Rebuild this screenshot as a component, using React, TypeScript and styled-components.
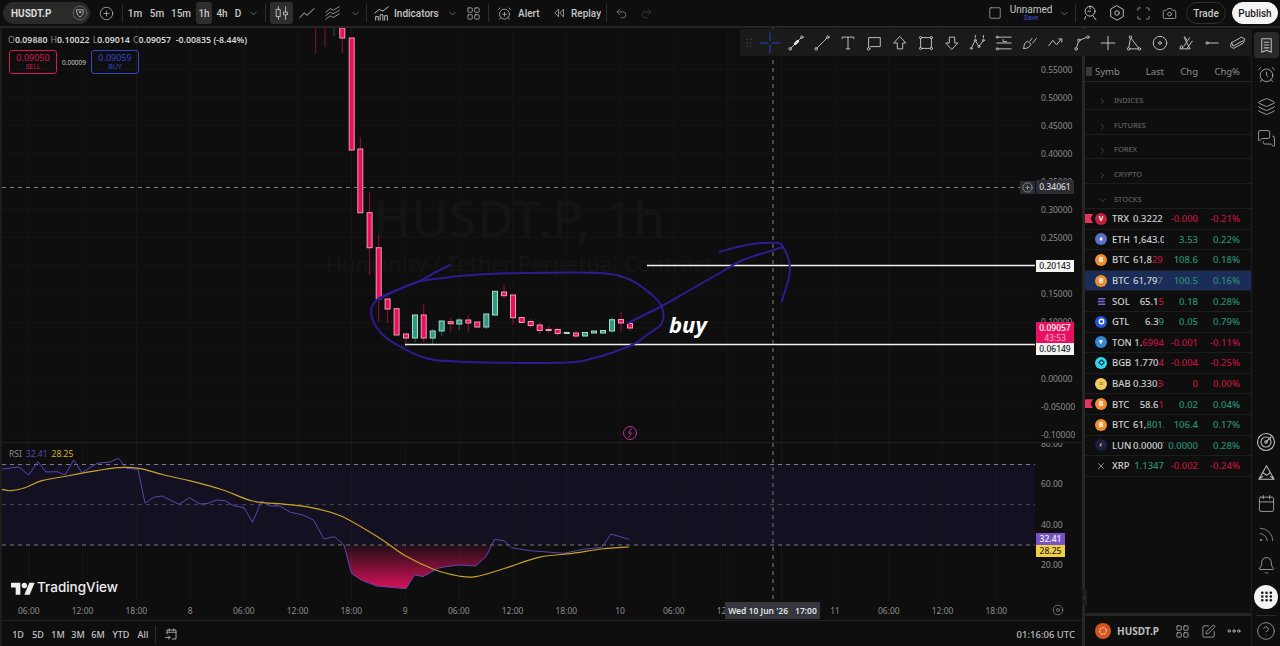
import React from 'react';
import styled, { createGlobalStyle } from 'styled-components';
import {
  AlarmClock,
  AlarmClockPlus,
  Bell,
  Calendar,
  Camera,
  ChevronDown,
  ChevronRight,
  CircleHelp,
  CirclePlus,
  Layers,
  LayoutGrid,
  MessagesSquare,
  Redo2,
  Rss,
  Scan,
  Square,
  SquarePen,
  Undo2,
  X,
} from 'lucide-react';

const FONT = '"Noto Sans", "Open Sans", sans-serif';
const BG = '#0e0e0e';
const LINE = '#262626';
const TEXT = '#c6c6c6';
const DIM = '#8c8c8c';
const RED = '#e8115f';
const GREEN = '#2e9a7f';
const GRID = '#151515';
const CELL = 53.75;

const GlobalStyle = createGlobalStyle`
  html, body { margin: 0; padding: 0; background: ${BG}; }
  body { font-family: ${FONT}; }
  * { box-sizing: border-box; }
`;

/* ---------- shell ---------- */

const Page = styled.div`
  position: relative;
  width: 1280px;
  height: 646px;
  overflow: hidden;
  display: flex;
  flex-direction: column;
  background: ${BG};
  color: ${TEXT};
`;

const TopBar = styled.header`
  height: 28px;
  flex: none;
  display: flex;
  align-items: center;
  padding: 0 2px 0 3px;
  border-bottom: 2px solid ${LINE};
  font-family: Roboto, ${FONT};
  font-size: 10px;
  font-weight: 500;
`;

const Workspace = styled.main`
  position: relative;
  flex: 1;
  min-height: 0;
  display: flex;
`;

const ChartColumn = styled.section`
  width: 1082px;
  flex: none;
  display: flex;
  flex-direction: column;
  border-left: 2px solid #1c1c1c;
`;

const ColumnRule = styled.div`
  width: 3px;
  flex: none;
  background: ${LINE};
`;

/* ---------- top bar ---------- */

const SymbolPill = styled.div`
  width: 87px;
  height: 22px;
  flex: none;
  display: flex;
  align-items: center;
  justify-content: space-between;
  padding: 0 2px 0 8px;
  border-radius: 11px;
  background: #2a2a2a;
  font-weight: 700;
  color: #dcdcdc;
`;

const Slot = styled.div<{ $w: number; $ml?: number; $on?: boolean }>`
  width: ${(p) => p.$w}px;
  height: 22px;
  flex: none;
  margin-left: ${(p) => p.$ml ?? 0}px;
  display: flex;
  align-items: center;
  justify-content: center;
  border-radius: 3px;
  background: ${(p) => (p.$on ? '#2e2e2e' : 'transparent')};
  white-space: nowrap;
`;

const BarRule = styled.div<{ $ml: number }>`
  width: 1px;
  height: 18px;
  flex: none;
  margin-left: ${(p) => p.$ml}px;
  background: #2c2c2c;
`;

const BarLabel = styled.span<{ $w: number; $ml?: number }>`
  width: ${(p) => p.$w}px;
  flex: none;
  margin-left: ${(p) => p.$ml ?? 0}px;
  font-weight: 500;
  white-space: nowrap;
`;

const BarRight = styled.div`
  margin-left: auto;
  display: flex;
  align-items: center;
`;

const LayoutName = styled.div`
  width: 50px;
  flex: none;
  display: flex;
  flex-direction: column;
  align-items: center;
  line-height: 9px;
  font-size: 10px;
  font-weight: 400;
`;

const SaveLink = styled.span`
  font-size: 7px;
  line-height: 8px;
  color: #3a4fd0;
`;

const PillButton = styled.div<{ $w: number; $ml: number; $solid?: boolean }>`
  width: ${(p) => p.$w}px;
  height: 22px;
  flex: none;
  margin-left: ${(p) => p.$ml}px;
  display: flex;
  align-items: center;
  justify-content: center;
  border-radius: 11px;
  border: 1px solid ${(p) => (p.$solid ? '#f4f4f4' : '#2f2f2f')};
  background: ${(p) => (p.$solid ? '#f4f4f4' : 'transparent')};
  color: ${(p) => (p.$solid ? '#1a1a1a' : TEXT)};
  font-weight: 500;
`;

/* ---------- icons ---------- */

const Glyph = styled.svg.attrs({ viewBox: '0 0 20 20', fill: 'none' })<{ $s?: number; $c?: string }>`
  width: ${(p) => p.$s ?? 18}px;
  height: ${(p) => p.$s ?? 18}px;
  flex: none;
  display: block;
  stroke: ${(p) => p.$c ?? '#bcbcbc'};
  stroke-width: 1.1;
  stroke-linecap: round;
  stroke-linejoin: round;
`;

const ico = { size: 15, strokeWidth: 1.2, color: '#bcbcbc' };
const chev = { size: 11, strokeWidth: 1.4, color: '#9a9a9a' };
const railIco = { size: 19, strokeWidth: 1, color: '#bcbcbc' };

/* ---------- drawing toolbar ---------- */

const DrawBar = styled.nav`
  position: absolute;
  top: 1px;
  left: 740px;
  z-index: 5;
  width: 512px;
  height: 27px;
  display: flex;
  align-items: center;
  background: #1a1a1a;
`;

const DrawGrip = styled.div`
  width: 17px;
  height: 26px;
  flex: none;
  display: flex;
  align-items: center;
  justify-content: center;
`;

const DrawTool = styled.div`
  width: 26px;
  height: 26px;
  flex: none;
  display: flex;
  align-items: center;
  justify-content: center;
`;

const drawTools: React.ReactNode[] = [
  <Glyph key="cross" $s={22} $c="#2d3fb8">
    <path d="M10 1v7M10 12v7M1 10h7M12 10h7" strokeWidth="1" />
  </Glyph>,
  <Glyph key="ray">
    <circle cx="3.5" cy="16.5" r="1.4" />
    <circle cx="16.5" cy="3.5" r="1.4" />
    <path d="M4.5 15.5l11-11" />
    <path d="M9 11l3-3" strokeWidth="3" stroke="#e8e8e8" />
  </Glyph>,
  <Glyph key="trend">
    <circle cx="3.5" cy="16.5" r="1.4" />
    <circle cx="16.5" cy="3.5" r="1.4" />
    <path d="M4.5 15.5l11-11" />
  </Glyph>,
  <Glyph key="text">
    <path d="M3.5 5V3.5h13V5M10 3.5v13M8 16.5h4" />
  </Glyph>,
  <Glyph key="note">
    <path d="M4 15V4h13v10H6" />
    <circle cx="4" cy="16.5" r="1.4" />
  </Glyph>,
  <Glyph key="up">
    <path d="M10 3l6.5 7H13v6.5H7V10H3.500z" />
  </Glyph>,
  <Glyph key="rect">
    <path d="M4 5.200v9.600M16 5.200v9.600M5.200 4h9.600M5.200 16h9.600" />
    <circle cx="4" cy="4" r="1.300" />
    <circle cx="16" cy="4" r="1.300" />
    <circle cx="4" cy="16" r="1.300" />
    <circle cx="16" cy="16" r="1.300" />
  </Glyph>,
  <Glyph key="down">
    <path d="M10 17l6.500-7H13V3.500H7V10H3.500z" />
  </Glyph>,
  <Glyph key="wave">
    <circle cx="2.500" cy="16" r="1.100" />
    <circle cx="7" cy="7" r="1.100" />
    <circle cx="11" cy="14" r="1.100" />
    <circle cx="16" cy="7" r="1.100" />
    <path d="M3 15l3.500-7.200M7.500 8l3 5M11.500 13l4-5.200M7 1.500v2.500M16 1.500v2.500" />
  </Glyph>,
  <Glyph key="fib">
    <path d="M4 3.500h14M2 10h16M4 16.500h14M9 6v2.500h4" />
    <circle cx="2.500" cy="3.500" r="1.200" />
    <circle cx="2.500" cy="16.500" r="1.200" />
  </Glyph>,
  <Glyph key="brush">
    <path d="M3 16c0-4 1.500-7 4.500-8l3.500 3.500c-1 3-4 5-8 4.500zM10 8l2-3M13 10l4-5" />
  </Glyph>,
  <Glyph key="zig">
    <path d="M2 13l4.500-6 4 5 5.500-6.500M13 5.500h3.500V9" />
  </Glyph>,
  <Glyph key="path">
    <circle cx="3.500" cy="16.500" r="1.400" />
    <circle cx="6.500" cy="7" r="1.400" />
    <circle cx="16.500" cy="3.500" r="1.400" />
    <path d="M4 15l2-6.500M8 6.500l7-2.500" />
  </Glyph>,
  <Glyph key="plus">
    <path d="M10 2.500v15M2.500 10h15" />
  </Glyph>,
  <Glyph key="tri">
    <circle cx="6" cy="3.500" r="1.400" />
    <circle cx="4" cy="16.500" r="1.400" />
    <circle cx="16" cy="16.500" r="1.400" />
    <path d="M6 5l-1.800 10M7 5l8 10.500M5.500 16.500h9" />
  </Glyph>,
  <Glyph key="circle">
    <circle cx="10" cy="10" r="7.500" />
    <circle cx="10" cy="10" r="1.500" />
  </Glyph>,
  <Glyph key="fan">
    <path d="M3 16.500h11.500L8 4M8.500 3l2.500 4M14 4l-6 9M17 8l-6 8" />
    <circle cx="5" cy="14.500" r="1.500" />
  </Glyph>,
  <Glyph key="seg">
    <circle cx="4.500" cy="10" r="1.300" />
    <path d="M6 10h11" />
  </Glyph>,
  <Glyph key="eraser">
    <path d="M3 9.500l11-6 3.500 2-1.500 4.500-11 6L2 14zM3 9.500l1.500 4 11-6" />
  </Glyph>,
];

/* ---------- price pane ---------- */

const PricePane = styled.div`
  height: 415px;
  flex: none;
  display: flex;
  border-bottom: 1px solid #1f1f1f;
`;

const RsiPane = styled.div`
  height: 157px;
  flex: none;
  display: flex;
`;

const Plot = styled.div`
  position: relative;
  width: 1033px;
  flex: none;
  overflow: hidden;
`;

const PlotSvg = styled.svg`
  position: relative;
  z-index: 1;
  display: block;
  width: 1033px;
  height: 100%;
`;

const Watermark = styled.div`
  position: absolute;
  top: 160px;
  left: 294px;
  width: 446px;
  text-align: center;
  color: #141414;
  font-weight: 500;
  white-space: nowrap;
`;

const WatermarkTitle = styled.div`
  font-size: 51px;
  line-height: 58px;
`;

const WatermarkSub = styled.div`
  font-size: 21.500px;
  line-height: 30px;
  margin-top: 3px;
`;

const Legend = styled.div`
  position: absolute;
  z-index: 2;
  top: 6px;
  left: 3px;
  font-size: 8.800px;
  line-height: 12px;
  font-weight: 600;
  color: #d4d4d4;
  white-space: nowrap;
`;

const LegendKey = styled.span`
  color: #8a8a8a;
  font-weight: 400;
  margin-left: 3px;
`;

const QuoteRow = styled.div`
  position: absolute;
  z-index: 2;
  top: 22px;
  left: 7px;
  display: flex;
  align-items: center;
`;

const QuoteBox = styled.div<{ $c: string }>`
  width: 48px;
  height: 24px;
  display: flex;
  flex-direction: column;
  align-items: center;
  justify-content: center;
  border: 1px solid ${(p) => p.$c};
  border-radius: 3px;
  color: ${(p) => p.$c};
  font-size: 9px;
  line-height: 10px;
`;

const QuoteTag = styled.span`
  font-size: 7px;
  line-height: 8px;
`;

const Spread = styled.span`
  width: 34px;
  text-align: center;
  font-size: 6.500px;
  color: #c8c8c8;
`;

const BuyNote = styled.div`
  position: absolute;
  z-index: 2;
  top: 281px;
  left: 667px;
  color: #fff;
  font: italic 700 22px/30px "Open Sans", ${FONT};
`;

const PriceAxis = styled.div`
  position: relative;
  width: 47px;
  flex: none;
  overflow: hidden;
  padding-top: 27px;
`;

const AxisTick = styled.div`
  height: 28.100px;
  display: flex;
  align-items: center;
  padding-left: 6px;
  font-size: 8.500px;
  color: ${DIM};
`;

const RsiAxis = styled(PriceAxis)`
  padding-top: 0;
`;

const RsiTick = styled.div<{ $h: number }>`
  height: ${(p) => p.$h}px;
  display: flex;
  align-items: center;
  padding-left: 6px;
  font-size: 8.500px;
  color: ${DIM};
`;

const AxisTag = styled.div<{ $top: number; $bg: string; $fg: string; $w?: number; $h?: number }>`
  position: absolute;
  z-index: 2;
  top: ${(p) => p.$top}px;
  left: 1px;
  width: ${(p) => p.$w ?? 38}px;
  height: ${(p) => p.$h ?? 12}px;
  display: flex;
  flex-direction: column;
  align-items: center;
  justify-content: center;
  background: ${(p) => p.$bg};
  color: ${(p) => p.$fg};
  font-size: 8.500px;
  line-height: 10px;
  font-weight: 500;
`;

const CountDown = styled.span`
  color: #ffb3c9;
  font-weight: 400;
`;

const CrossBadge = styled.div`
  position: absolute;
  z-index: 2;
  top: 153px;
  left: 1018px;
  width: 15px;
  height: 13px;
  display: flex;
  align-items: center;
  justify-content: center;
  background: #2b2d33;
`;

const RsiLegend = styled.div`
  position: absolute;
  z-index: 2;
  top: 5px;
  left: 7px;
  display: flex;
  gap: 4px;
  font-size: 8.500px;
  line-height: 12px;
`;

const RsiValue = styled.span<{ $c: string }>`
  color: ${(p) => p.$c};
`;

const BrandMark = styled.div`
  position: absolute;
  z-index: 2;
  bottom: 3px;
  left: 9px;
  display: flex;
  align-items: center;
  gap: 2px;
  color: #eee;
  font: 500 13.500px/20px Inter, ${FONT};
`;

/* ---------- time axis and range bar ---------- */

const TimeAxis = styled.div`
  position: relative;
  height: 21px;
  flex: none;
  display: flex;
  align-items: center;
  border-bottom: 1px solid #222;
`;

const TimeCell = styled.span`
  width: ${CELL}px;
  flex: none;
  text-align: center;
  font-size: 8.500px;
  color: ${DIM};
`;

const TimeFlag = styled.div`
  position: absolute;
  top: 2px;
  left: 723px;
  width: 95px;
  height: 17px;
  display: flex;
  align-items: center;
  justify-content: center;
  gap: 7px;
  background: #33363c;
  color: #e4e4e4;
  font-size: 8.500px;
  font-weight: 600;
`;

const AxisGear = styled.div`
  position: absolute;
  top: 4px;
  left: 1050px;
`;

const RangeBar = styled.footer`
  flex: 1;
  min-height: 0;
  display: flex;
  align-items: center;
  padding: 2px 0 0 6px;
  font-size: 9px;
  font-weight: 500;
`;

const RangeClock = styled.span`
  margin-left: auto;
  padding-right: 7px;
  font-size: 9.500px;
  color: #bdbdbd;
`;

/* ---------- watchlist ---------- */

const Watchlist = styled.aside`
  width: 166px;
  flex: none;
  display: flex;
  flex-direction: column;
  padding-top: 32.500px;
`;

const ListHeader = styled.div`
  height: 21px;
  flex: none;
  display: flex;
  align-items: center;
  padding: 1px 0 0 10px;
  border-bottom: 1px solid ${LINE};
  font-size: 9.500px;
  color: ${DIM};
`;

const HeaderMark = styled.span`
  position: absolute;
  left: 1086px;
  width: 6px;
  height: 9px;
  background: #3a3a3a;
`;

const HeadCell = styled.span<{ $w: number; $left?: boolean }>`
  width: ${(p) => p.$w}px;
  flex: none;
  text-align: ${(p) => (p.$left ? 'left' : 'right')};
`;

const GroupRow = styled.div<{ $first?: boolean }>`
  height: ${(p) => (p.$first ? 28.300 : 24.800)}px;
  flex: none;
  display: flex;
  align-items: flex-end;
  gap: 7px;
  padding: 0 0 3px 13px;
  border-bottom: 1px solid #1d1d1d;
  font-size: 7.500px;
  line-height: 11px;
  color: #6f6f6f;
`;

const StockRow = styled.div<{ $on?: boolean }>`
  position: relative;
  height: 20.600px;
  flex: none;
  display: flex;
  align-items: center;
  padding-left: 10px;
  border-bottom: 1px solid #1d1d1d;
  background: ${(p) => (p.$on ? '#1a2c58' : 'transparent')};
  font-size: 9.500px;
  font-weight: 500;
`;

const Ribbon = styled.span`
  position: absolute;
  left: 0;
  top: 5px;
  width: 8px;
  height: 9px;
  background: #e8335f;
  clip-path: polygon(0 0, 100% 0, 70% 50%, 100% 100%, 0 100%);
`;

const CoinBadge = styled.span<{ $bg: string; $fg?: string }>`
  width: 12px;
  height: 12px;
  flex: none;
  display: flex;
  align-items: center;
  justify-content: center;
  border-radius: 50%;
  background: ${(p) => p.$bg};
  color: ${(p) => p.$fg ?? '#fff'};
  font-size: 7px;
  line-height: 12px;
  font-weight: 700;
`;

const Ticker = styled.span`
  width: 19px;
  flex: none;
  margin: 0 2px 0 5px;
  overflow: hidden;
  color: #cfcfcf;
`;

const LastCell = styled.span`
  width: 31px;
  flex: none;
  overflow: hidden;
  text-align: right;
  white-space: nowrap;
  color: #cfcfcf;
  font-weight: 500;
`;

const Flash = styled.span<{ $c: string }>`
  color: ${(p) => p.$c};
`;

const ChangeCell = styled.span<{ $w: number; $up: boolean }>`
  width: ${(p) => p.$w}px;
  flex: none;
  text-align: right;
  white-space: nowrap;
  color: ${(p) => (p.$up ? '#2b8f76' : '#c2123f')};
`;

const ListFooter = styled.div`
  margin-top: auto;
  height: 33px;
  flex: none;
  display: flex;
  align-items: center;
  padding-left: 10px;
  border-top: 3px solid ${LINE};
`;

const FooterCoin = styled.span`
  width: 16px;
  height: 16px;
  flex: none;
  display: flex;
  align-items: center;
  justify-content: center;
  border-radius: 50%;
  background: #d2551f;
`;

const FooterName = styled.span`
  width: 52px;
  flex: none;
  margin-left: 6px;
  font-size: 10px;
  font-weight: 700;
  color: #bdbdbd;
`;

const FooterTool = styled.div`
  width: 26px;
  flex: none;
  display: flex;
  justify-content: center;
`;

const CollapseHandle = styled.div`
  position: absolute;
  top: 562px;
  left: 1082px;
  z-index: 3;
  width: 5px;
  height: 16px;
  display: flex;
  align-items: center;
  justify-content: center;
  background: #1e1e1e;
`;

/* ---------- right rail ---------- */

const Rail = styled.aside`
  flex: 1;
  display: flex;
  flex-direction: column;
  align-items: center;
  border-left: 1px solid #1d1d1d;
  padding-top: 4px;
`;

const RailTile = styled.div`
  width: 25px;
  height: 26px;
  flex: none;
  display: flex;
  align-items: center;
  justify-content: center;
  border-radius: 4px;
  background: #2a2a2a;
`;

const RailSlot = styled.div<{ $h?: number }>`
  height: ${(p) => p.$h ?? 32}px;
  flex: none;
  display: flex;
  align-items: center;
  justify-content: center;
`;

const RailBottom = styled.div`
  margin-top: auto;
  display: flex;
  flex-direction: column;
  align-items: center;
`;

const RailRule = styled.div`
  width: 20px;
  height: 1px;
  flex: none;
  margin-top: 3px;
  background: #2a2a2a;
`;

const AppsDot = styled.div`
  width: 24px;
  height: 24px;
  display: flex;
  align-items: center;
  justify-content: center;
  border-radius: 50%;
  background: #f4f4f4;
`;

/* ---------- chart data ---------- */

type Candle = [number, number, number, number?, number?];

const redCandles: Candle[] = [
  [342.3, 28, 38, 28, 53], [351.7, 38, 150], [360.3, 149, 212.7, 137, 213], [369.6, 212.7, 247.7, 192, 275],
  [378.7, 247.7, 299, 235, 322], [387.6, 299, 309, 299, 323], [396.6, 308.7, 335], [406, 334, 338, 334, 347],
  [423.7, 315, 338, 304, 342], [450.7, 321.7, 323.7, 318, 332], [468.3, 320, 323, 315, 332], [477.3, 322, 327],
  [504, 292, 295.7, 285, 299], [513, 295, 317.7, 295, 325], [521.7, 317.5, 322.5], [530.7, 321.5, 325.5, 319, 328],
  [539.7, 325, 330.5, 322, 334], [548.7, 329.5, 330.5, 326, 333], [557.7, 329.5, 333.5, 328, 336], [576, 333, 336, 331, 338],
  [621, 319.5, 323, 312, 332], [630, 323.5, 328, 323, 331],
];

const greenCandles: Candle[] = [
  [415, 315, 338, 315, 342], [432.7, 331, 338, 329, 345], [441.7, 321, 331, 321, 336], [459.3, 320, 324, 318, 330],
  [486.3, 314, 327, 314, 329], [495, 291.3, 315], [566.7, 332.5, 333.5], [585, 332.5, 336], [594, 331, 333],
  [603, 330.5, 333], [612, 319.7, 331, 318, 333],
];

const purple: number[][] = [
  [2, 469], [19, 467], [28.6, 475], [38, 461.7], [46, 472], [57, 471.7], [65, 475], [73.7, 460], [82, 472.7], [97, 463.3],
  [110, 462], [118.7, 458.3], [126, 468.3], [138, 469.3], [145, 503.3], [153.6, 497.3], [162, 496], [179, 504.3],
  [189.4, 497.7], [200, 504], [208, 503.3], [216.7, 500], [225, 500.7], [233.6, 505.7], [244, 507.7], [252.5, 522.3],
  [261.8, 500.7], [269.4, 506], [280, 506], [290.4, 512.3], [303, 515], [313.5, 520], [324, 539], [334.6, 536.7],
  [344, 545], [351.4, 573.3], [361, 580], [376.7, 586], [406, 588.7], [414.6, 575], [423, 576.7], [437.7, 568.3],
  [446, 566.7], [458.7, 565], [475.6, 566], [486, 556.7], [494.5, 539.3], [504, 540.7], [511.4, 547.7], [530, 550.7],
  [564, 553.3], [583, 549.3], [602, 547.3], [611, 534], [629, 539.3],
];

const yellow: number[][] = [
  [2, 489.3], [10.5, 490.7], [25, 487.7], [42, 480.7], [67, 476], [97, 470.7], [118, 467.7], [139, 468.3], [164, 475],
  [189.4, 480.7], [223, 490], [252.5, 501], [286, 504.3], [311.4, 507.7], [341, 516], [379, 537.7], [404, 555],
  [433.5, 569.3], [458.7, 576], [475.6, 576.7], [505, 568.3], [538.7, 557.3], [572.4, 553.3], [602, 549], [629, 547],
];

const ring: number[][] = [
  [420, 281], [460, 276], [506.7, 273.3], [593, 272.7], [626.7, 278.3], [650, 293.3], [661.7, 306.7], [661.7, 323.3],
  [646.7, 335], [631.7, 345], [593, 358.3], [560, 362.7], [460, 361.7], [426.7, 358.3], [403.3, 348.3], [383, 335],
  [371.7, 316.7], [375, 301.7], [393, 291.7], [420, 281],
];

const arrowShaft: number[][] = [[628, 323], [660, 307], [690, 290], [720, 273], [743, 260], [783, 247]];
const arrowHead: number[][] = [[720, 251.7], [746.7, 245], [773, 242.7], [783, 246.7], [790, 270], [781.7, 301.7]];

// catmull-rom through the points, for the hand drawn strokes
const smooth = (pts: number[][]) => {
  let d = `M${pts[0][0]} ${pts[0][1]}`;
  for (let i = 0; i < pts.length - 1; i++) {
    const a = pts[Math.max(i - 1, 0)];
    const b = pts[i];
    const c = pts[i + 1];
    const e = pts[Math.min(i + 2, pts.length - 1)];
    const c1 = [b[0] + (c[0] - a[0]) / 6, b[1] + (c[1] - a[1]) / 6];
    const c2 = [c[0] - (e[0] - b[0]) / 6, c[1] - (e[1] - b[1]) / 6];
    d += ` C${c1[0].toFixed(1)} ${c1[1].toFixed(1)} ${c2[0].toFixed(1)} ${c2[1].toFixed(1)} ${c[0]} ${c[1]}`;
  }
  return d;
};

const toPoints = (pts: number[][]) => pts.map((p) => p.join(',')).join(' ');

const dip = purple.filter((p) => p[0] >= 344 && p[0] <= 494.5);
const dipArea = `${toPoints(dip)} 494.5,545 344,545`;

// empty labels sit fully under a flag or a price tag in the picture
const timeLabels = ['06:00', '12:00', '18:00', '8', '06:00', '12:00', '18:00', '9', '06:00', '12:00', '18:00', '10', '06:00', '12:00', '', '11', '06:00', '12:00', '18:00'];
const gridXs = timeLabels.map((_, i) => 29 + CELL * i);
const priceTicks = ['0.55000', '0.50000', '0.45000', '0.40000', '0.35000', '0.30000', '0.25000', '', '0.15000', '0.10000', '', '0.00000', '-0.05000', '-0.10000'];
const priceYs = priceTicks.map((_, i) => 69 + 28.1 * i);

const CandleMarks = ({ data, body, edge }: { data: Candle[]; body: string; edge: string }) => (
  <>
    {data.map(([x, top, bottom, hi, lo]) => (
      <g key={x}>
        {hi !== undefined && <line x1={x} x2={x} y1={hi} y2={lo} stroke={body} strokeOpacity="0.6" />}
        <rect x={x - 2.5} y={top} width={5} height={bottom - top} fill={body} stroke={edge} />
      </g>
    ))}
  </>
);

const PriceChart = () => (
  <PlotSvg viewBox="2 28 1033 414">
    {priceYs.map((y) => (
      <line key={y} x1="2" x2="1035" y1={y} y2={y} stroke={GRID} />
    ))}
    {gridXs.map((x) => (
      <line key={x} x1={x} x2={x} y1="28" y2="442" stroke={GRID} />
    ))}
    <line x1="2" x2="1035" y1="328" y2="328" stroke="#3b1522" strokeDasharray="1 2" />
    <path d="M315.7 28v25M325 28v19" stroke={RED} strokeOpacity="0.55" />
    <path d="M334 28v8" stroke={GREEN} strokeOpacity="0.6" />
    <CandleMarks data={redCandles} body={RED} edge="#f59ab5" />
    <CandleMarks data={greenCandles} body={GREEN} edge="#a5dccb" />
    <path d="M647 265.500H1035M405 344.500H1035" stroke="#f0f0f0" strokeWidth="1.500" />
    <path d="M2 187.500H1020" stroke="#7c7c7c" strokeDasharray="4 4" />
    <path d="M773 28V442" stroke="#7c7c7c" strokeDasharray="4 4" />
    <g fill="none" stroke="#2c1c92" strokeWidth="2" strokeLinecap="round">
      <path d="M450 265Q435 272 420 281Q400 288 379 299" />
      <path d={smooth(ring)} />
      <path d={smooth(arrowShaft)} />
      <path d={smooth(arrowHead)} />
    </g>
    <g fill="none" stroke="#c0309a">
      <circle cx="630" cy="433" r="6.500" />
      <path d="M631.500 428.500l-3 4.500h3l-3 4.500" />
    </g>
  </PlotSvg>
);

const RsiChart = () => (
  <PlotSvg viewBox="2 443 1033 157">
    <defs>
      <linearGradient id="dipFill" x1="0" x2="0" y1="545" y2="590" gradientUnits="userSpaceOnUse">
        <stop offset="0" stopColor="#e8115f" stopOpacity="0.08" />
        <stop offset="1" stopColor="#e8115f" stopOpacity="0.95" />
      </linearGradient>
    </defs>
    <rect x="2" y="464" width="1033" height="81" fill="#131022" />
    {gridXs.map((x) => (
      <line key={x} x1={x} x2={x} y1="443" y2="600" stroke="#191919" strokeOpacity="0.7" />
    ))}
    <polygon points={dipArea} fill="url(#dipFill)" />
    <path d="M2 464.500H1035M2 545H1035" stroke="#7c7c7c" strokeDasharray="4 4" />
    <path d="M2 504.700H1035" stroke="#4e4e4e" strokeDasharray="4 4" />
    <path d="M773 443V600" stroke="#7c7c7c" strokeDasharray="4 4" />
    <polyline points={toPoints(purple)} fill="none" stroke="#5b45b0" />
    <path d={smooth(yellow)} fill="none" stroke="#c9a227" strokeWidth="1.200" />
  </PlotSvg>
);

/* ---------- watchlist data ---------- */

type Stock = {
  coin: React.ReactNode;
  name: string;
  last: string;
  tail?: string;
  tailColor?: string;
  chg: string;
  pct: string;
  up: boolean;
  flag?: boolean;
  on?: boolean;
};

const FLASH_RED = '#c2123f';
const FLASH_GREEN = '#2b8f76';

const btcCoin = <CoinBadge $bg="#ee8e2f">B</CoinBadge>;

const stocks: Stock[] = [
  { coin: <CoinBadge $bg="#c2203f">V</CoinBadge>, name: 'TRX', last: '0.3222', tail: '14', tailColor: FLASH_RED, chg: '-0.000', pct: '-0.21%', up: false, flag: true },
  { coin: <CoinBadge $bg="#5d6fc9">♦</CoinBadge>, name: 'ETH', last: '1,643.02', chg: '3.53', pct: '0.22%', up: true },
  { coin: btcCoin, name: 'BTC', last: '61,8', tail: '29.1', tailColor: FLASH_RED, chg: '108.6', pct: '0.18%', up: true },
  { coin: btcCoin, name: 'BTC', last: '61,79', tail: '7.1', tailColor: '#5a7a9a', chg: '100.5', pct: '0.16%', up: true, on: true },
  {
    coin: (
      <CoinBadge $bg="transparent">
        <Glyph $s={11} $c="#7a6ae0">
          <path d="M5 5h11M4 10h11M5 15h11" strokeWidth="2.500" />
        </Glyph>
      </CoinBadge>
    ),
    name: 'SOL', last: '65.1', tail: '5', tailColor: FLASH_RED, chg: '0.18', pct: '0.28%', up: true,
  },
  {
    coin: (
      <CoinBadge $bg="#2757d6">
        <Glyph $s={9} $c="#fff">
          <circle cx="10" cy="10" r="5" strokeWidth="3" />
        </Glyph>
      </CoinBadge>
    ),
    name: 'GTL', last: '6.3', tail: '9', tailColor: FLASH_GREEN, chg: '0.05', pct: '0.79%', up: true,
  },
  { coin: <CoinBadge $bg="#3586d2">▾</CoinBadge>, name: 'TON', last: '1.', tail: '6994', tailColor: FLASH_RED, chg: '-0.001', pct: '-0.11%', up: false },
  {
    coin: (
      <CoinBadge $bg="#35d6ea">
        <Glyph $s={9} $c="#0c3f4a">
          <path d="M4 10l6-6 6 6-6 6z" strokeWidth="2.500" />
        </Glyph>
      </CoinBadge>
    ),
    name: 'BGB', last: '1.770', tail: '4', tailColor: FLASH_RED, chg: '-0.004', pct: '-0.25%', up: false,
  },
  { coin: <CoinBadge $bg="#efcb60" $fg="#8a6a10">≡</CoinBadge>, name: 'BAB', last: '0.330', tail: '36', tailColor: FLASH_RED, chg: '0', pct: '0.00%', up: false },
  { coin: btcCoin, name: 'BTC', last: '58.6', tail: '1', tailColor: FLASH_RED, chg: '0.02', pct: '0.04%', up: true, flag: true },
  { coin: btcCoin, name: 'BTC', last: '61,', tail: '801.1', tailColor: FLASH_GREEN, chg: '106.4', pct: '0.17%', up: true },
  { coin: <CoinBadge $bg="#1b1f45" $fg="#f0c93a">◐</CoinBadge>, name: 'LUN', last: '0.0000', tail: '74', tailColor: '#9a9a9a', chg: '0.0000', pct: '0.28%', up: true },
  {
    coin: (
      <CoinBadge $bg="transparent">
        <X size={10} strokeWidth={1.6} color="#c8c8c8" />
      </CoinBadge>
    ),
    name: 'XRP', last: '', tail: '1.1347', tailColor: FLASH_GREEN, chg: '-0.002', pct: '-0.24%', up: false,
  },
];

const groups = ['INDICES', 'FUTURES', 'FOREX', 'CRYPTO'];
const ranges: [string, number][] = [['1D', 20], ['5D', 20], ['1M', 20], ['3M', 20], ['6M', 20], ['YTD', 26], ['All', 18]];

export default function App() {
  return (
    <Page>
      <GlobalStyle />
      <TopBar>
        <SymbolPill>
          HUSDT.P
          <Glyph $s={16}>
            <circle cx="10" cy="10" r="8.500" stroke="#6a6a6a" />
            <path d="M6 6h8v4c0 2-2 3.500-4 5-2-1.500-4-3-4-5z" />
            <circle cx="10" cy="9" r="1" />
          </Glyph>
        </SymbolPill>
        <Slot $w={32}><CirclePlus {...ico} /></Slot>
        <BarRule $ml={0} />
        <Slot $w={22} $ml={1}>1m</Slot>
        <Slot $w={22}>5m</Slot>
        <Slot $w={26}>15m</Slot>
        <Slot $w={16} $ml={2} $on>1h</Slot>
        <Slot $w={20}>4h</Slot>
        <Slot $w={12}>D</Slot>
        <Slot $w={14} $ml={2}><ChevronDown {...chev} /></Slot>
        <BarRule $ml={5} />
        <Slot $w={23} $ml={4} $on>
          <Glyph>
            <path d="M6 3v14M14 3v14" />
            <rect x="4" y="6" width="4" height="8" fill="#2e2e2e" />
            <path d="M12 9h4v3h-4z" fill="#2e2e2e" />
          </Glyph>
        </Slot>
        <Slot $w={26} $ml={1}>
          <Glyph><path d="M2 15l5-5 3 2.500L18 5" /></Glyph>
        </Slot>
        <Slot $w={26}>
          <Glyph $c="#8f8f8f">
            <path d="M2 9l5-4 3 2 7-4M2 13l5-4 3 2 7-4M2 17l5-4 3 2 7-4" />
          </Glyph>
        </Slot>
        <Slot $w={18}><ChevronDown {...chev} /></Slot>
        <BarRule $ml={2} />
        <Slot $w={20} $ml={5}>
          <Glyph>
            <path d="M2 10l5-4 4 2 6-5M3 18v-4h3v4M8 18v-6h3v6M13 18v-5h3v5" />
          </Glyph>
        </Slot>
        <BarLabel $w={48} $ml={2}>Indicators</BarLabel>
        <Slot $w={14} $ml={3}><ChevronDown {...chev} /></Slot>
        <Slot $w={22} $ml={3}><LayoutGrid {...ico} /></Slot>
        <BarRule $ml={4} />
        <Slot $w={28} $ml={1}><AlarmClockPlus {...ico} /></Slot>
        <BarLabel $w={24}>Alert</BarLabel>
        <Slot $w={28} $ml={3}>
          <Glyph $s={14}><path d="M9 5l-5 5 5 5zM16 5l-5 5 5 5z" /></Glyph>
        </Slot>
        <BarLabel $w={35} $ml={-2}>Replay</BarLabel>
        <BarRule $ml={0} />
        <Slot $w={28}><Undo2 size={13} strokeWidth={1.200} color="#9a9a9a" /></Slot>
        <Slot $w={22}><Redo2 size={13} strokeWidth={1.200} color="#4a4a4a" /></Slot>
        <BarRight>
          <Slot $w={22}><Square size={14} strokeWidth={1.200} color="#bcbcbc" /></Slot>
          <LayoutName>
            Unnamed
            <SaveLink>Save</SaveLink>
          </LayoutName>
          <Slot $w={16}><ChevronDown {...chev} /></Slot>
          <BarRule $ml={3} />
          <Slot $w={26} $ml={2}>
            <Glyph>
              <circle cx="9" cy="8" r="5.500" />
              <path d="M9 2.500v3M4 14l-1 3M12 13l3.500 4.500M6.500 8h3" />
            </Glyph>
          </Slot>
          <Slot $w={26}>
            <Glyph>
              <path d="M10 2l7 4v8l-7 4-7-4V6z" />
              <circle cx="10" cy="10" r="2.500" />
            </Glyph>
          </Slot>
          <Slot $w={26}><Scan {...ico} /></Slot>
          <Slot $w={26}><Camera {...ico} /></Slot>
          <PillButton $w={40} $ml={4}>Trade</PillButton>
          <PillButton $w={46} $ml={6} $solid>Publish</PillButton>
        </BarRight>
      </TopBar>

      <Workspace>
        <DrawBar>
          <DrawGrip>
            <Glyph $s={14} $c="#444">
              <path d="M7 5h.6M12 5h.6M7 10h.6M12 10h.6M7 15h.6M12 15h.6" strokeWidth="1.800" />
            </Glyph>
          </DrawGrip>
          {drawTools.map((tool, i) => (
            <DrawTool key={i}>{tool}</DrawTool>
          ))}
        </DrawBar>

        <ChartColumn>
          <PricePane>
            <Plot>
              <Watermark>
                <WatermarkTitle>HUSDT.P, 1h</WatermarkTitle>
                <WatermarkSub>Humanity / Tether Perpetual Contract</WatermarkSub>
              </Watermark>
              <PriceChart />
              <Legend>
                <LegendKey>O</LegendKey>0.09880
                <LegendKey>H</LegendKey>0.10022
                <LegendKey>L</LegendKey>0.09014
                <LegendKey>C</LegendKey>0.09057 &nbsp;-0.00835 (-8.44%)
              </Legend>
              <QuoteRow>
                <QuoteBox $c="#d8184f">
                  0.09050
                  <QuoteTag>SELL</QuoteTag>
                </QuoteBox>
                <Spread>0.00009</Spread>
                <QuoteBox $c="#3346c8">
                  0.09059
                  <QuoteTag>BUY</QuoteTag>
                </QuoteBox>
              </QuoteRow>
              <BuyNote>buy</BuyNote>
              <CrossBadge>
                <CirclePlus size={11} strokeWidth={1.300} color="#bcbcbc" />
              </CrossBadge>
            </Plot>
            <PriceAxis>
              {priceTicks.map((t, i) => (
                <AxisTick key={i}>{t}</AxisTick>
              ))}
              <AxisTag $top={152} $h={14} $bg="#2b2d33" $fg="#d8d8d8">0.34061</AxisTag>
              <AxisTag $top={232} $bg="#f4f4f4" $fg="#222">0.20143</AxisTag>
              <AxisTag $top={294} $h={21} $bg={RED} $fg="#fff">
                0.09057
                <CountDown>43:53</CountDown>
              </AxisTag>
              <AxisTag $top={315} $bg="#f4f4f4" $fg="#222">0.06149</AxisTag>
            </PriceAxis>
          </PricePane>

          <RsiPane>
            <Plot>
              <RsiChart />
              <RsiLegend>
                <RsiValue $c={DIM}>RSI</RsiValue>
                <RsiValue $c="#5b45b0">32.41</RsiValue>
                <RsiValue $c="#d9b52e">28.25</RsiValue>
              </RsiLegend>
              <BrandMark>
                <svg width="24" height="15" viewBox="0 0 36 22" fill="#eee">
                  <path d="M14 22H7V11H0V4h14v18zM28 22h-8l7.500-18h8L28 22z" />
                  <circle cx="20" cy="8" r="4" />
                </svg>
                TradingView
              </BrandMark>
            </Plot>
            <RsiAxis>
              <RsiTick $h={0}>80.00</RsiTick>
              <RsiTick $h={80}>60.00</RsiTick>
              <RsiTick $h={2}>40.00</RsiTick>
              <RsiTick $h={78}>20.00</RsiTick>
              <AxisTag $top={90} $w={29} $bg="#7a52c8" $fg="#f2f2f2">32.41</AxisTag>
              <AxisTag $top={102} $w={29} $bg="#f0d040" $fg="#222">28.25</AxisTag>
            </RsiAxis>
          </RsiPane>

          <TimeAxis>
            {timeLabels.map((t, i) => (
              <TimeCell key={i}>{t}</TimeCell>
            ))}
            <TimeFlag>
              <span>Wed 10 Jun &apos;26</span>
              <span>17:00</span>
            </TimeFlag>
            <AxisGear>
              <Glyph $s={12} $c="#9a9a9a">
                <circle cx="10" cy="10" r="8" />
                <circle cx="10" cy="10" r="2.500" />
              </Glyph>
            </AxisGear>
          </TimeAxis>

          <RangeBar>
            {ranges.map(([label, w]) => (
              <Slot key={label} $w={w}>{label}</Slot>
            ))}
            <BarRule $ml={3} />
            <Slot $w={30}>
              <Glyph $s={15}>
                <path d="M4 9V4h12v12h-5M4 7h12M7 2.500V5M13 2.500V5M2 14h6M6 12l2 2-2 2" />
              </Glyph>
            </Slot>
            <RangeClock>01:16:06 UTC</RangeClock>
          </RangeBar>
        </ChartColumn>

        <ColumnRule />

        <Watchlist>
          <ListHeader>
            <HeaderMark />
            <HeadCell $w={46} $left>Symb</HeadCell>
            <HeadCell $w={23}>Last</HeadCell>
            <HeadCell $w={34}>Chg</HeadCell>
            <HeadCell $w={42}>Chg%</HeadCell>
          </ListHeader>
          {groups.map((g, i) => (
            <GroupRow key={g} $first={i === 0}>
              <ChevronRight size={9} strokeWidth={1.400} color="#6f6f6f" />
              {g}
            </GroupRow>
          ))}
          <GroupRow>
            <ChevronDown size={9} strokeWidth={1.400} color="#6f6f6f" />
            STOCKS
          </GroupRow>
          {stocks.map((s, i) => (
            <StockRow key={i} $on={s.on}>
              {s.flag && <Ribbon />}
              {s.coin}
              <Ticker>{s.name}</Ticker>
              <LastCell>
                {s.last}
                {s.tail && <Flash $c={s.tailColor ?? TEXT}>{s.tail}</Flash>}
              </LastCell>
              <ChangeCell $w={34} $up={s.up}>{s.chg}</ChangeCell>
              <ChangeCell $w={42} $up={s.up}>{s.pct}</ChangeCell>
            </StockRow>
          ))}
          <ListFooter>
            <FooterCoin>
              <Glyph $s={12} $c="#f3c7b0">
                <circle cx="10" cy="10" r="5.500" strokeDasharray="2 3" strokeWidth="2" />
              </Glyph>
            </FooterCoin>
            <FooterName>HUSDT.P</FooterName>
            <FooterTool><LayoutGrid {...ico} /></FooterTool>
            <FooterTool><SquarePen {...ico} /></FooterTool>
            <FooterTool>
              <Glyph $s={16}>
                <circle cx="4" cy="10" r="1.500" />
                <circle cx="10" cy="10" r="1.500" />
                <circle cx="16" cy="10" r="1.500" />
              </Glyph>
            </FooterTool>
          </ListFooter>
        </Watchlist>

        <CollapseHandle>
          <ChevronRight size={6} strokeWidth={1.500} color="#888" />
        </CollapseHandle>

        <Rail>
          <RailTile>
            <Glyph $s={19}>
              <path d="M5 3h10v14l-5-2-5 2zM7.500 6.500h5M7.500 9.500h5M7.500 12.500h5" />
            </Glyph>
          </RailTile>
          <RailSlot><AlarmClock {...railIco} /></RailSlot>
          <RailSlot><Layers {...railIco} /></RailSlot>
          <RailSlot><MessagesSquare {...railIco} /></RailSlot>
          <RailBottom>
            <RailSlot $h={31}>
              <Glyph $s={20}>
                <circle cx="10" cy="10" r="8.500" />
                <circle cx="10" cy="10" r="5" />
                <circle cx="10" cy="10" r="1.200" />
                <path d="M10 10l5-5" />
              </Glyph>
            </RailSlot>
            <RailSlot $h={31}>
              <Glyph $s={19}>
                <path d="M2 17h16L10 3zM6 10l4 3 4-3M2 17l4-3M18 17l-4-3" />
              </Glyph>
            </RailSlot>
            <RailSlot $h={31}><Calendar {...railIco} /></RailSlot>
            <RailSlot $h={31}><Rss {...railIco} color="#9a9a9a" /></RailSlot>
            <RailSlot $h={31}><Bell {...railIco} /></RailSlot>
            <RailSlot $h={31}>
              <AppsDot>
                <Glyph $s={17} $c="#111">
                  <path d="M5 5.500h.1M10 5.500h.1M15 5.500h.1M5 10h.1M10 10h.1M15 10h.1M5 14.500h.1M10 14.500h.1M15 14.500h.1" strokeWidth="3" />
                </Glyph>
              </AppsDot>
            </RailSlot>
            <RailRule />
            <RailSlot $h={30}><CircleHelp size={20} strokeWidth={1} color="#a0a0a0" /></RailSlot>
          </RailBottom>
        </Rail>
      </Workspace>
    </Page>
  );
}
